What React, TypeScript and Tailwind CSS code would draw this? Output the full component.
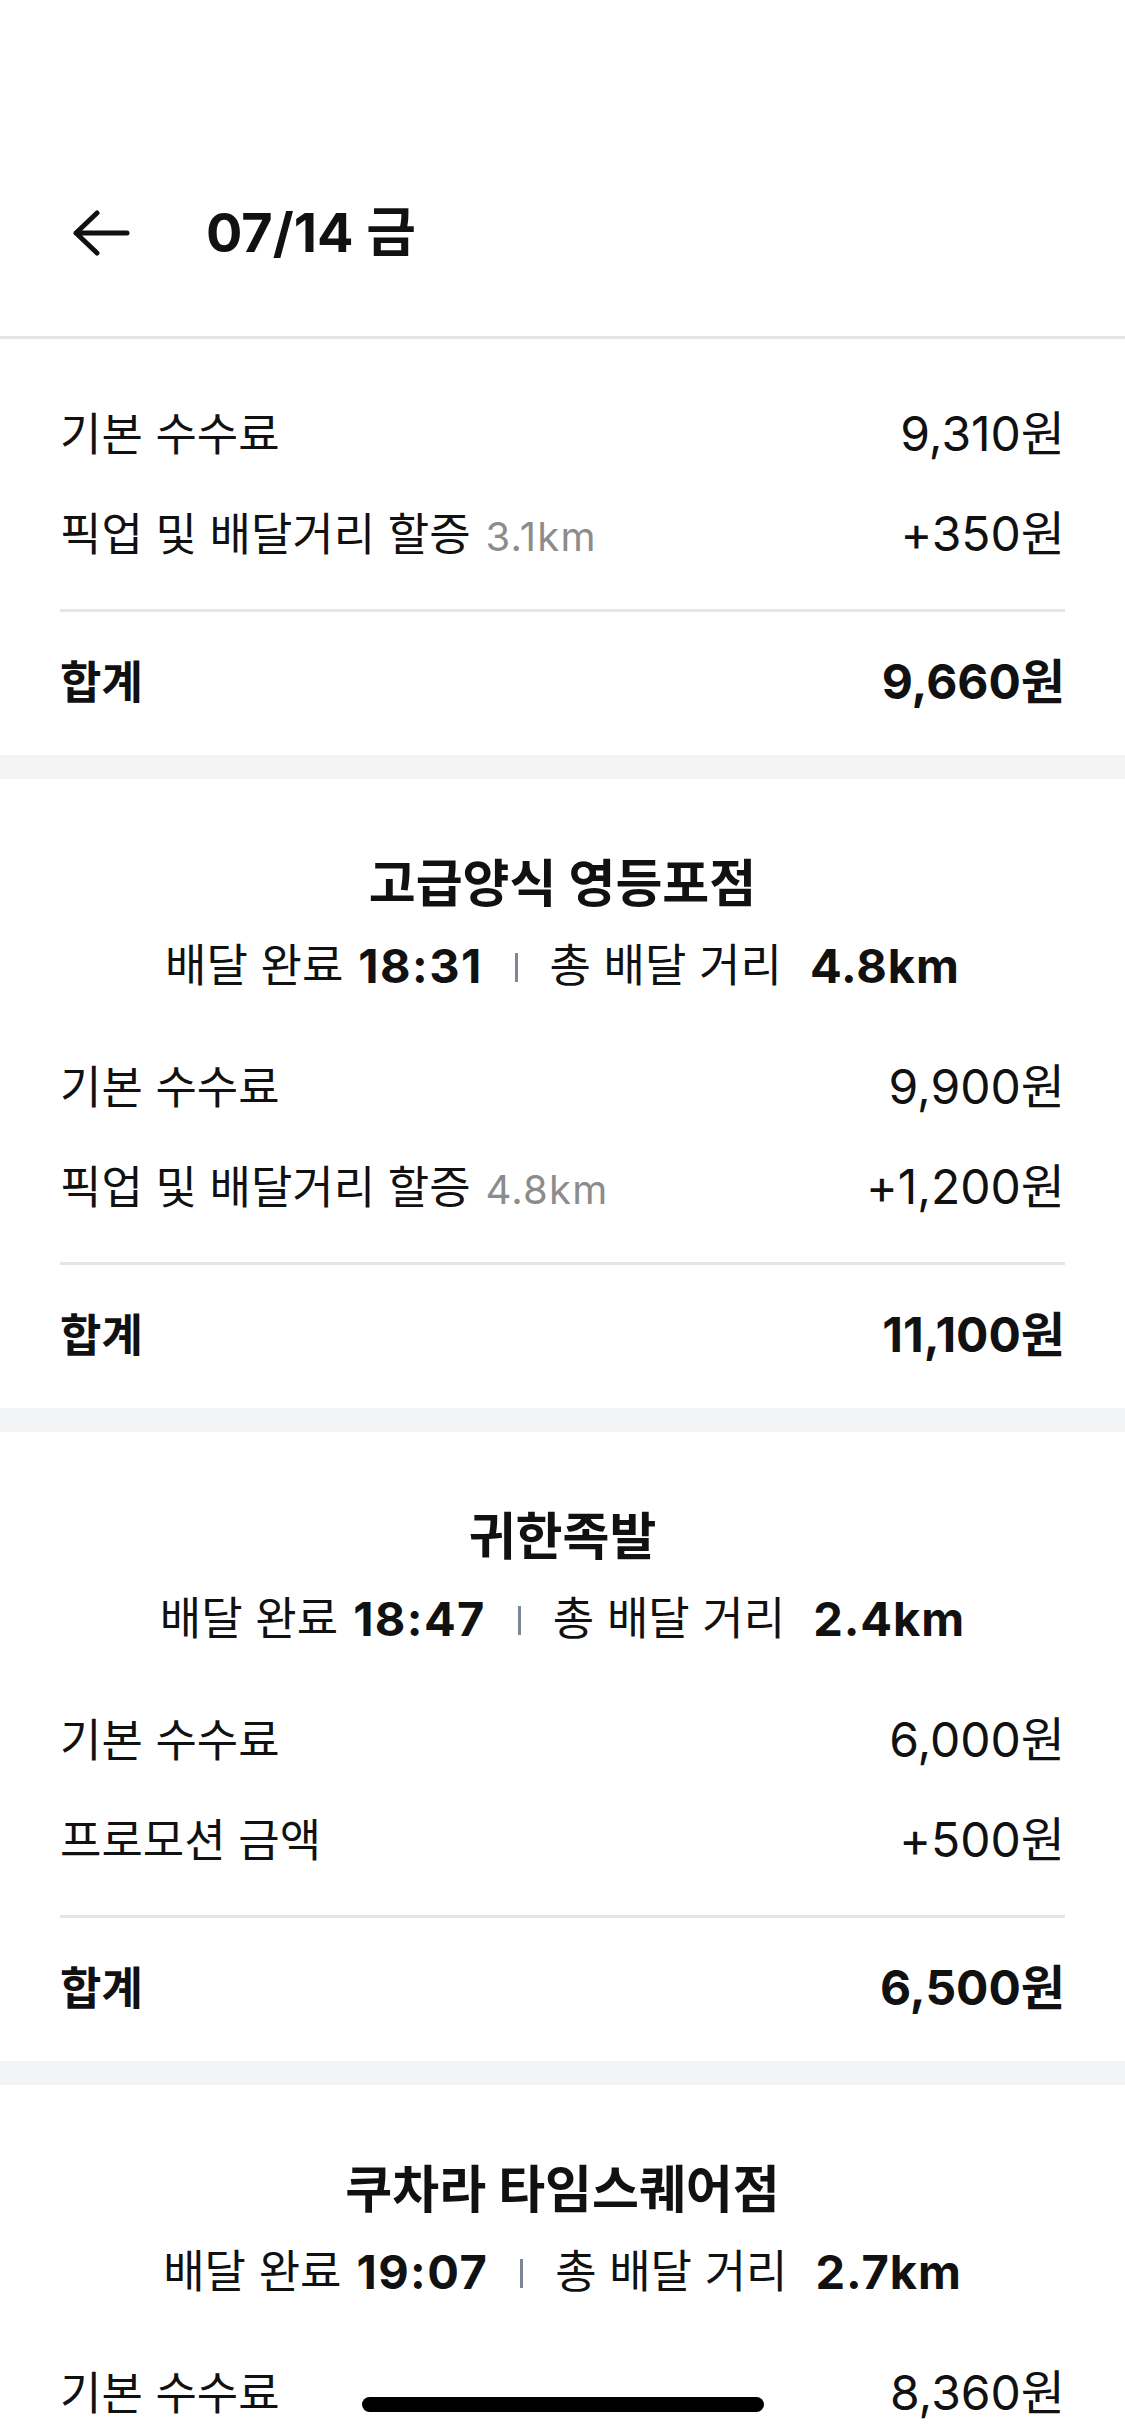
import React from "react";

type FeeRow = { label: string; hint?: string; amount: string };
type Delivery = {
  store?: string;
  time?: string;
  distance?: string;
  rows: FeeRow[];
  total: string;
};

const deliveries: Delivery[] = [
  {
    rows: [
      { label: "기본 수수료", amount: "9,310원" },
      { label: "픽업 및 배달거리 할증", hint: "3.1km", amount: "+350원" },
    ],
    total: "9,660원",
  },
  {
    store: "고급양식 영등포점",
    time: "18:31",
    distance: "4.8km",
    rows: [
      { label: "기본 수수료", amount: "9,900원" },
      { label: "픽업 및 배달거리 할증", hint: "4.8km", amount: "+1,200원" },
    ],
    total: "11,100원",
  },
  {
    store: "귀한족발",
    time: "18:47",
    distance: "2.4km",
    rows: [
      { label: "기본 수수료", amount: "6,000원" },
      { label: "프로모션 금액", amount: "+500원" },
    ],
    total: "6,500원",
  },
  {
    store: "쿠차라 타임스퀘어점",
    time: "19:07",
    distance: "2.7km",
    rows: [
      { label: "기본 수수료", amount: "8,360원" },
      { label: "픽업 및 배달거리 할증", hint: "2.7km", amount: "+200원" },
    ],
    total: "8,560원",
  },
];

const BackArrow: React.FC = () => (
  <svg width="58" height="46" viewBox="0 0 58 46" fill="none">
    <path
      d="M55 23H4M25 3L4 23l21 20"
      stroke="#111"
      strokeWidth="5"
      strokeLinecap="round"
      strokeLinejoin="round"
    />
  </svg>
);

const DeliveryCard: React.FC<{ delivery: Delivery }> = ({ delivery }) => (
  <section className="bg-white px-[60px] pb-[23px]">
    {delivery.store ? (
      <div className="pt-[76px] pb-[44px]">
        <h2 className="flex h-[56px] items-center justify-center text-[51px] font-bold leading-none">
          {delivery.store}
        </h2>
        <div className="mt-[26px] flex h-[56px] items-center justify-center text-[45px] leading-none">
          <span>배달 완료</span>
          <span className="ml-[15px] text-[47px] font-bold tracking-[0.03em]">
            {delivery.time}
          </span>
          <span className="mx-[32px] h-[29px] w-[3px] translate-y-[2px] bg-[#7d8795]" />
          <span>총 배달 거리</span>
          <span className="ml-[28px] text-[47px] font-bold tracking-[0.02em]">
            {delivery.distance}
          </span>
        </div>
      </div>
    ) : (
      <div className="h-[45px]" />
    )}

    {delivery.rows.map((row) => (
      <div
        key={row.label}
        className="flex h-[100px] items-center justify-between leading-none"
      >
        <div className="flex items-baseline">
          <span className="text-[45px]">{row.label}</span>
          {row.hint && (
            <span className="ml-[15px] text-[40px] tracking-[0.03em] text-[#8c8c8c]">
              {row.hint}
            </span>
          )}
        </div>
        <span className="text-[48px]">{row.amount}</span>
      </div>
    ))}

    <div className="mt-[25px] h-[3px] bg-[#e3e5e8]" />

    <div className="mt-[20px] flex h-[100px] items-center justify-between font-bold leading-none">
      <span className="text-[45px]">합계</span>
      <span className="text-[48px]">{delivery.total}</span>
    </div>
  </section>
);

const App: React.FC = () => {
  return (
    <div className="relative h-[2436px] overflow-hidden bg-white font-['Inter','Noto_Sans_CJK_KR',sans-serif] text-[#111]">
      <header className="border-b-[3px] border-[#e3e5e8] bg-white pt-[190px] pb-[60px]">
        <div className="flex h-[86px] items-center pl-[72px]">
          <BackArrow />
          <h1 className="ml-[76px] text-[54px] font-bold leading-none">
            07/14 금
          </h1>
        </div>
      </header>

      <div className="flex flex-col">
        {deliveries.map((delivery, index) => (
          <React.Fragment key={index}>
            {index > 0 && <div className="h-[24px] bg-[#f2f3f5]" />}
            <DeliveryCard delivery={delivery} />
          </React.Fragment>
        ))}
      </div>

      <div className="absolute bottom-[24px] left-1/2 h-[15px] w-[402px] -translate-x-1/2 rounded-full bg-black" />
    </div>
  );
};

export default App;
